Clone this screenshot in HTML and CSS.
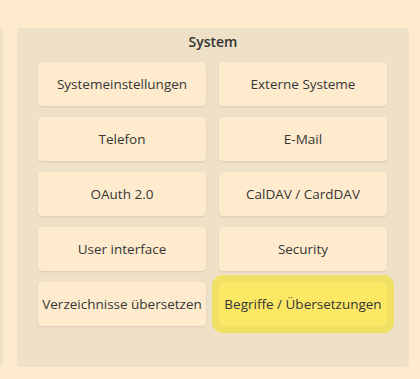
FILE: index.html
```html
<!DOCTYPE html>
<html lang="de">
<head>
  <meta charset="UTF-8">
  <meta name="viewport" content="width=device-width, initial-scale=1.0">
  <title>System</title>
  <link rel="stylesheet" href="styles.css">
</head>
<body>
  <div class="settings-row">
    <div class="side-panel"></div>
    <div class="system-panel">
      <h2>System</h2>
      <div class="button-grid">
        <button class="btn-setting">Systemeinstellungen</button>
        <button class="btn-setting">Externe Systeme</button>
        <button class="btn-setting">Telefon</button>
        <button class="btn-setting">E-Mail</button>
        <button class="btn-setting">OAuth 2.0</button>
        <button class="btn-setting">CalDAV / CardDAV</button>
        <button class="btn-setting">User interface</button>
        <button class="btn-setting">Security</button>
        <button class="btn-setting">Verzeichnisse übersetzen</button>
        <button class="btn-setting highlighted">Begriffe / Übersetzungen</button>
      </div>
    </div>
  </div>
</body>
</html>
```

FILE: styles.css
```css
body {
  margin: 0;
  background-color: #feebcd;
  font-family: "Open Sans", Arial, sans-serif;
  color: #333333;
}

.settings-row {
  display: flex;
  gap: 14px;
  padding-top: 28px;
}

.side-panel {
  width: 3px;
  height: 339px;
  background-color: #efe0c8;
  border-radius: 0 4px 4px 0;
}

.system-panel {
  width: 392px;
  height: 339px;
  box-sizing: border-box;
  padding: 4px 21px 0 21px;
  background-color: #efe0c8;
  border-radius: 4px;
}

h2 {
  margin: 0 0 11px 0;
  font-size: 14px;
  line-height: 19px;
  font-weight: 600;
  text-align: center;
  color: #333333;
}

.button-grid {
  display: grid;
  grid-template-columns: 168px 168px;
  grid-auto-rows: 44px;
  column-gap: 13px;
  row-gap: 11px;
}

.btn-setting {
  padding: 0 1px;
  background-color: #feebcd;
  color: #363636;
  border: none;
  border-radius: 4px;
  box-shadow: 0 1px 2px rgba(0, 0, 0, 0.1);
  font-family: "Open Sans", Arial, sans-serif;
  font-size: 13.5px;
  cursor: pointer;
}

.btn-setting.highlighted {
  background-color: #fce865;
  box-shadow: none;
  outline: 7px solid #f0e063;
}
```
